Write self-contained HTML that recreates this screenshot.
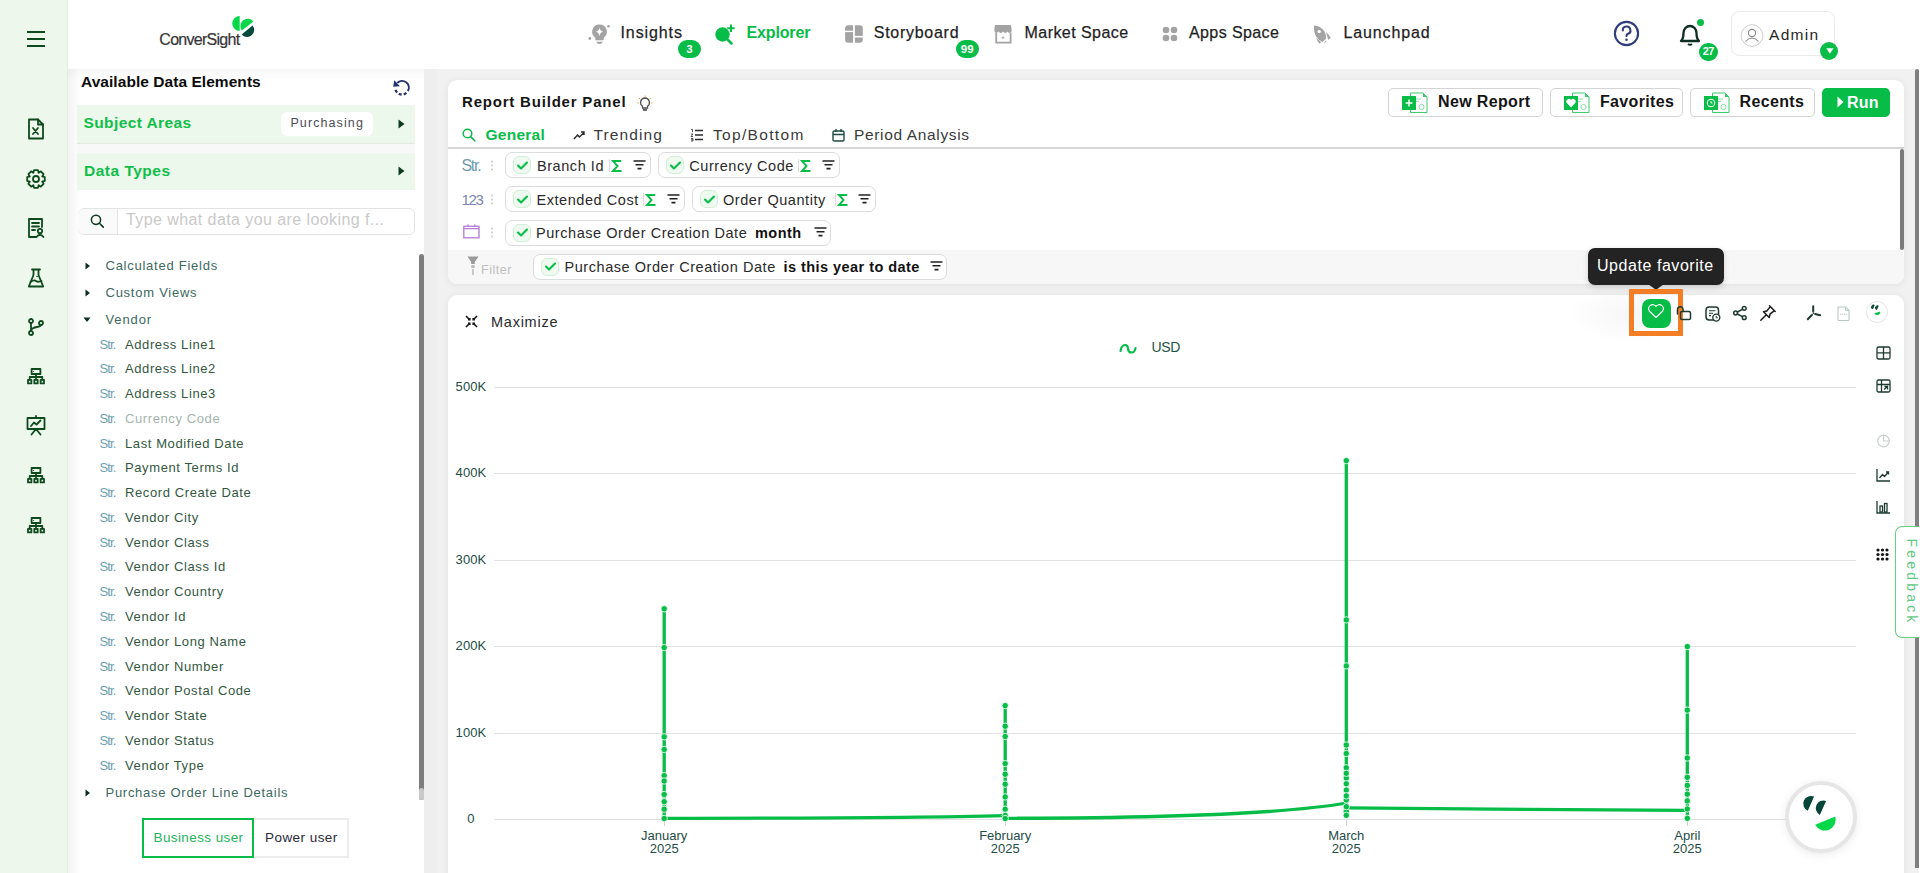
<!DOCTYPE html>
<html><head><meta charset="utf-8"><title>ConverSight Explorer</title>
<style>
*{box-sizing:border-box;margin:0;padding:0}
html,body{width:1923px;height:873px;overflow:hidden;background:#fff;font-family:"Liberation Sans",sans-serif}
body{position:relative}
.a{position:absolute}
.t{position:absolute;white-space:nowrap}
svg{overflow:visible}
</style></head><body>

<div class="a" style="left:424px;top:69px;width:1499px;height:804px;background:#f1f1f1"></div>
<div class="a" style="left:424px;top:69px;width:13px;height:804px;background:#eeeeee"></div>
<div class="a" style="left:68px;top:69px;width:356px;height:804px;background:#fff"></div>
<div class="a" style="left:68px;top:69px;width:356px;height:11px;background:linear-gradient(180deg,#f7f7f7,#fff)"></div>
<div class="a" style="left:68px;top:69px;width:12px;height:804px;background:linear-gradient(90deg,rgba(0,0,0,0.05),rgba(0,0,0,0))"></div>
<div class="a" style="left:68px;top:0px;width:1855px;height:69px;background:#fff"></div>
<div class="a" style="left:0px;top:0px;width:68px;height:873px;background:#edf7ec;border-right:1px solid #e3eee3"></div>
<div class="a" style="left:27px;top:31px;width:18px;height:2px;background:#0e4a1c"></div>
<div class="a" style="left:27px;top:38px;width:18px;height:2px;background:#0e4a1c"></div>
<div class="a" style="left:27px;top:45px;width:18px;height:2px;background:#0e4a1c"></div>
<svg class="a" style="left:27px;top:118px;" width="18" height="22" viewBox="0 0 18 22"><path d="M2 1.5 H11 L16 6.5 V20.5 H2 Z" fill="none" stroke="#0e4a1c" stroke-width="1.8" stroke-linejoin="round" stroke-linecap="round"/><path d="M11 1.5 V6.5 H16" fill="none" stroke="#0e4a1c" stroke-width="1.8" stroke-linejoin="round" stroke-linecap="round"/><path d="M6 10 L11 16 M11 10 L6 16" fill="none" stroke="#0e4a1c" stroke-width="1.8" stroke-linejoin="round" stroke-linecap="round" stroke-width="1.5"/></svg>
<svg class="a" style="left:26px;top:169px;" width="20" height="20" viewBox="0 0 20 20"><path d="M18.78 8.04 L18.78 11.96 L16.21 12.77 L16.35 12.43 L17.60 14.82 L14.82 17.60 L12.43 16.35 L12.77 16.21 L11.96 18.78 L8.04 18.78 L7.23 16.21 L7.57 16.35 L5.18 17.60 L2.40 14.82 L3.65 12.43 L3.79 12.77 L1.22 11.96 L1.22 8.04 L3.79 7.23 L3.65 7.57 L2.40 5.18 L5.18 2.40 L7.57 3.65 L7.23 3.79 L8.04 1.22 L11.96 1.22 L12.77 3.79 L12.43 3.65 L14.82 2.40 L17.60 5.18 L16.35 7.57 L16.21 7.23Z" fill="none" stroke="#0e4a1c" stroke-width="1.8" stroke-linejoin="round" stroke-linecap="round"/><circle cx="10" cy="10" r="3" fill="none" stroke="#0e4a1c" stroke-width="1.8" stroke-linejoin="round" stroke-linecap="round"/></svg>
<svg class="a" style="left:27px;top:217px;" width="18" height="21" viewBox="0 0 18 21"><path d="M9 20 H2 V2 H15 V10" fill="none" stroke="#0e4a1c" stroke-width="1.8" stroke-linejoin="round" stroke-linecap="round"/><path d="M5 6 H12 M5 9.5 H12 M5 13 H8" fill="none" stroke="#0e4a1c" stroke-width="1.8" stroke-linejoin="round" stroke-linecap="round" stroke-width="1.6"/><circle cx="13" cy="14" r="2.2" fill="none" stroke="#0e4a1c" stroke-width="1.8" stroke-linejoin="round" stroke-linecap="round" stroke-width="1.6"/><path d="M9.5 20 Q13 15.5 16.5 20" fill="none" stroke="#0e4a1c" stroke-width="1.8" stroke-linejoin="round" stroke-linecap="round" stroke-width="1.6"/></svg>
<svg class="a" style="left:27px;top:268px;" width="18" height="20" viewBox="0 0 18 20"><path d="M5 1.5 H13 M6.5 1.5 V7 L1.8 18.5 H16.2 L11.5 7 V1.5" fill="none" stroke="#0e4a1c" stroke-width="1.8" stroke-linejoin="round" stroke-linecap="round"/><path d="M3.5 14 Q7 11.5 9 13 T14.5 13" fill="none" stroke="#0e4a1c" stroke-width="1.8" stroke-linejoin="round" stroke-linecap="round" stroke-width="1.5"/><circle cx="10" cy="8.5" r="0.8" fill="#0e4a1c"/></svg>
<svg class="a" style="left:28px;top:318px;" width="16" height="18" viewBox="0 0 16 18"><circle cx="3" cy="3" r="2" fill="none" stroke="#0e4a1c" stroke-width="1.8" stroke-linejoin="round" stroke-linecap="round"/><circle cx="3" cy="15" r="2" fill="none" stroke="#0e4a1c" stroke-width="1.8" stroke-linejoin="round" stroke-linecap="round"/><circle cx="13" cy="5" r="2" fill="none" stroke="#0e4a1c" stroke-width="1.8" stroke-linejoin="round" stroke-linecap="round"/><path d="M3 5 V13 M3 12 Q4 10 9 9 Q12.5 8.5 13 7" fill="none" stroke="#0e4a1c" stroke-width="1.8" stroke-linejoin="round" stroke-linecap="round"/></svg>
<svg class="a" style="left:27px;top:368px;" width="18" height="17" viewBox="0 0 18 17"><rect x="4.6" y="1" width="8.8" height="5" fill="none" stroke="#0e4a1c" stroke-width="1.8" stroke-linejoin="round" stroke-linecap="round" stroke-width="1.6"/><path d="M9 6 V9 M2.7 11.5 V9 H15.3 V11.5 M9 9 V11.5" fill="none" stroke="#0e4a1c" stroke-width="1.8" stroke-linejoin="round" stroke-linecap="round" stroke-width="1.4"/><rect x="1" y="11.8" width="3.4" height="3.6" fill="none" stroke="#0e4a1c" stroke-width="1.8" stroke-linejoin="round" stroke-linecap="round" stroke-width="1.5"/><rect x="7.3" y="11.8" width="3.4" height="3.6" fill="none" stroke="#0e4a1c" stroke-width="1.8" stroke-linejoin="round" stroke-linecap="round" stroke-width="1.5"/><rect x="13.6" y="11.8" width="3.4" height="3.6" fill="none" stroke="#0e4a1c" stroke-width="1.8" stroke-linejoin="round" stroke-linecap="round" stroke-width="1.5"/><circle cx="6.6" cy="3.5" r="0.6" fill="#0e4a1c"/></svg>
<svg class="a" style="left:27px;top:467px;" width="18" height="17" viewBox="0 0 18 17"><rect x="4.6" y="1" width="8.8" height="5" fill="none" stroke="#0e4a1c" stroke-width="1.8" stroke-linejoin="round" stroke-linecap="round" stroke-width="1.6"/><path d="M9 6 V9 M2.7 11.5 V9 H15.3 V11.5 M9 9 V11.5" fill="none" stroke="#0e4a1c" stroke-width="1.8" stroke-linejoin="round" stroke-linecap="round" stroke-width="1.4"/><rect x="1" y="11.8" width="3.4" height="3.6" fill="none" stroke="#0e4a1c" stroke-width="1.8" stroke-linejoin="round" stroke-linecap="round" stroke-width="1.5"/><rect x="7.3" y="11.8" width="3.4" height="3.6" fill="none" stroke="#0e4a1c" stroke-width="1.8" stroke-linejoin="round" stroke-linecap="round" stroke-width="1.5"/><rect x="13.6" y="11.8" width="3.4" height="3.6" fill="none" stroke="#0e4a1c" stroke-width="1.8" stroke-linejoin="round" stroke-linecap="round" stroke-width="1.5"/><circle cx="6.6" cy="3.5" r="0.6" fill="#0e4a1c"/></svg>
<svg class="a" style="left:27px;top:517px;" width="18" height="17" viewBox="0 0 18 17"><rect x="4.6" y="1" width="8.8" height="5" fill="none" stroke="#0e4a1c" stroke-width="1.8" stroke-linejoin="round" stroke-linecap="round" stroke-width="1.6"/><path d="M9 6 V9 M2.7 11.5 V9 H15.3 V11.5 M9 9 V11.5" fill="none" stroke="#0e4a1c" stroke-width="1.8" stroke-linejoin="round" stroke-linecap="round" stroke-width="1.4"/><rect x="1" y="11.8" width="3.4" height="3.6" fill="none" stroke="#0e4a1c" stroke-width="1.8" stroke-linejoin="round" stroke-linecap="round" stroke-width="1.5"/><rect x="7.3" y="11.8" width="3.4" height="3.6" fill="none" stroke="#0e4a1c" stroke-width="1.8" stroke-linejoin="round" stroke-linecap="round" stroke-width="1.5"/><rect x="13.6" y="11.8" width="3.4" height="3.6" fill="none" stroke="#0e4a1c" stroke-width="1.8" stroke-linejoin="round" stroke-linecap="round" stroke-width="1.5"/><circle cx="6.6" cy="3.5" r="0.6" fill="#0e4a1c"/></svg>
<svg class="a" style="left:26px;top:415px;" width="20" height="21" viewBox="0 0 20 21"><path d="M10 1 V3" fill="none" stroke="#0e4a1c" stroke-width="1.8" stroke-linejoin="round" stroke-linecap="round"/><rect x="1.5" y="3" width="17" height="11" fill="none" stroke="#0e4a1c" stroke-width="1.8" stroke-linejoin="round" stroke-linecap="round"/><path d="M5 11 L8 7.5 L10.5 9.5 L14.5 5.5" fill="none" stroke="#0e4a1c" stroke-width="1.8" stroke-linejoin="round" stroke-linecap="round" stroke-width="1.6"/><path d="M10 14 L5.5 19.5 M10 14 L14.5 19.5" fill="none" stroke="#0e4a1c" stroke-width="1.8" stroke-linejoin="round" stroke-linecap="round"/></svg>
<div class="t " style="left:159.3px;top:31.7px;font-size:16px;line-height:16px;color:#363636;font-weight:400;letter-spacing:-0.72px;-webkit-text-stroke:0.2px #363636">ConverSight</div>
<svg class="a" style="left:231px;top:15px;" width="25" height="24" viewBox="0 0 25 24"><path d="M8.7 1 A7.45 7.45 0 0 0 8.7 15.9 Z" fill="#06d84a"/><path d="M10.9 15.5 A7.3 7.3 0 0 1 22.4 6.5 Z" fill="#06d84a"/><path d="M10.7 19.5 L21.5 10.4 A7.05 7.05 0 0 1 10.7 19.5 Z" fill="#05493a"/></svg>
<svg class="a" style="left:588px;top:23px;" width="24" height="22" viewBox="0 0 24 22"><path d="M11.5 1.5 A7.3 7.3 0 0 0 7.3 14.8 V17.3 H15.7 V14.8 A7.3 7.3 0 0 0 11.5 1.5Z" fill="#a3a3a3"/><path d="M8.3 18.8 H14.7 Q14 21 11.5 21 Q9 21 8.3 18.8Z" fill="#a3a3a3"/><path d="M11.5 4.3 Q12 8 15.2 8.8 Q12 9.6 11.5 13.3 Q11 9.6 7.8 8.8 Q11 8 11.5 4.3Z" fill="#fff"/><circle cx="20.5" cy="3.3" r="1.3" fill="#a3a3a3"/><circle cx="1.8" cy="15.5" r="1.4" fill="#a3a3a3"/></svg>
<div class="t " style="left:620.5px;top:24.7px;font-size:16px;line-height:16px;color:#1f1f1f;font-weight:400;letter-spacing:0.9px;-webkit-text-stroke:0.25px #1f1f1f">Insights</div>
<div class="a" style="left:678px;top:40px;width:23px;height:18px;background:#07bd48;border-radius:9px"></div>
<div class="t " style="left:678.0px;top:43.6px;font-size:11.5px;line-height:11.5px;color:#fff;font-weight:700;letter-spacing:0px;width:23px;text-align:center">3</div>
<svg class="a" style="left:714px;top:22px;" width="23" height="24" viewBox="0 0 23 24"><circle cx="8.5" cy="12.5" r="7.2" fill="#07bd48"/><path d="M13 17 L17.5 21.5" stroke="#07bd48" stroke-width="2.6" stroke-linecap="round"/><path d="M17 2.5 V10 M13.3 6.2 H20.7" stroke="#07bd48" stroke-width="2"/></svg>
<div class="t " style="left:746.5px;top:24.7px;font-size:16px;line-height:16px;color:#07bd48;font-weight:700;letter-spacing:-0.15px;">Explorer</div>
<svg class="a" style="left:845px;top:25px;" width="18" height="18" viewBox="0 0 18 18"><rect x="0.1" y="0.3" width="17.7" height="17.5" rx="3.2" fill="#a3a3a3"/><rect x="8.1" y="0" width="1.8" height="18" fill="#fff"/><rect x="0" y="5.7" width="8.5" height="1.4" fill="#fff"/><rect x="9.5" y="10.9" width="8.5" height="1.6" fill="#fff"/></svg>
<div class="t " style="left:873.8px;top:24.7px;font-size:16px;line-height:16px;color:#1f1f1f;font-weight:400;letter-spacing:0.72px;-webkit-text-stroke:0.25px #1f1f1f">Storyboard</div>
<div class="a" style="left:955.5px;top:40px;width:23.5px;height:18px;background:#07bd48;border-radius:9px"></div>
<div class="t " style="left:955.5px;top:43.6px;font-size:11.5px;line-height:11.5px;color:#fff;font-weight:700;letter-spacing:0px;width:23.5px;text-align:center">99</div>
<svg class="a" style="left:994px;top:25px;" width="18" height="19" viewBox="0 0 18 19"><path d="M0.3 5 Q0.3 7.5 2.2 8 Q4.1 7.5 4.5 6.6 Q5.2 8 6.75 8 Q8.3 8 9 6.6 Q9.7 8 11.25 8 Q12.8 8 13.5 6.6 Q14 7.8 15.8 8 Q17.7 7.5 17.7 5 L17 0 H1Z" fill="#a3a3a3"/><path d="M2.2 7.5 V17.7 H16.6 V7.5" fill="none" stroke="#a3a3a3" stroke-width="1.8"/><path d="M9 10.5 L9.6 12.2 L11.3 12.6 L9.6 13 L9 14.8 L8.4 13 L6.7 12.6 L8.4 12.2Z" fill="#a3a3a3"/></svg>
<div class="t " style="left:1024.5px;top:24.7px;font-size:16px;line-height:16px;color:#1f1f1f;font-weight:400;letter-spacing:0.45px;-webkit-text-stroke:0.25px #1f1f1f">Market Space</div>
<svg class="a" style="left:1162px;top:26px;" width="16" height="16" viewBox="0 0 16 16"><circle cx="4" cy="4" r="3.3" fill="#a3a3a3"/><circle cx="12" cy="4" r="3.3" fill="#a3a3a3"/><circle cx="4" cy="12" r="3.3" fill="#a3a3a3"/><circle cx="12" cy="12" r="3.3" fill="#a3a3a3"/></svg>
<div class="t " style="left:1189.0px;top:24.7px;font-size:16px;line-height:16px;color:#1f1f1f;font-weight:400;letter-spacing:0.4px;-webkit-text-stroke:0.25px #1f1f1f">Apps Space</div>
<svg class="a" style="left:1313px;top:25px;" width="19" height="19" viewBox="0 0 19 19"><path d="M1 0.5 Q7.5 0.5 11.5 6.5 Q13.5 10 13 13.8 L9.6 17 Q5.5 15.5 3.2 11.5 Q0.3 6.5 1 0.5Z" fill="#a3a3a3"/><circle cx="6.2" cy="6.6" r="1.7" fill="#fff"/><path d="M13 7 Q15.5 9 17.8 12.8 L15.2 14.7 Z" fill="#a3a3a3"/><path d="M3 12.2 L8 17.3 L6.5 18.7 Q4 15.5 3 12.2Z" fill="#a3a3a3"/><path d="M11.5 16.8 L13.8 15.2 L11.6 18.5Z" fill="#a3a3a3"/></svg>
<div class="t " style="left:1343.5px;top:24.7px;font-size:16px;line-height:16px;color:#1f1f1f;font-weight:400;letter-spacing:0.88px;-webkit-text-stroke:0.25px #1f1f1f">Launchpad</div>
<svg class="a" style="left:1613px;top:20px;" width="27" height="27" viewBox="0 0 27 27"><circle cx="13.5" cy="13.5" r="11.6" fill="none" stroke="#2f3d7a" stroke-width="2.1"/><path d="M9.8 10.5 A3.8 3.8 0 1 1 14.5 14 Q13.5 14.6 13.5 16" fill="none" stroke="#2f3d7a" stroke-width="2.1" stroke-linecap="round"/><circle cx="13.5" cy="19.8" r="1.3" fill="#2f3d7a"/></svg>
<svg class="a" style="left:1679px;top:22.2px;" width="22" height="24" viewBox="0 0 22 24"><path d="M2 19 Q4.5 17 4.5 11 A6.5 7 0 0 1 17.5 11 Q17.5 17 20 19 Z" fill="none" stroke="#0e2e22" stroke-width="2.3" stroke-linejoin="round"/><path d="M9 22 Q11 23.5 13 22" fill="none" stroke="#0e2e22" stroke-width="2"/></svg>
<div class="a" style="left:1697px;top:18.8px;width:7px;height:7px;border-radius:50%;background:#07bd48"></div>
<div class="a" style="left:1699px;top:42.5px;width:18.5px;height:18.5px;border-radius:50%;background:#07bd48"></div>
<div class="t " style="left:1699.0px;top:46.3px;font-size:11px;line-height:11px;color:#fff;font-weight:700;letter-spacing:-0.5px;width:18.5px;text-align:center">27</div>
<div class="a" style="left:1730.5px;top:11px;width:104px;height:45px;border:1px solid #ebebeb;border-radius:8px"></div>
<svg class="a" style="left:1739.5px;top:23.5px;" width="24" height="23" viewBox="0 0 24 23"><circle cx="12" cy="11.5" r="10.8" fill="none" stroke="#c9c9c9" stroke-width="0.9"/><circle cx="12" cy="9" r="3.6" fill="none" stroke="#8a8a8a" stroke-width="1.1"/><path d="M5.5 17.5 Q12 10.5 18.5 17.5" fill="none" stroke="#8a8a8a" stroke-width="1.1"/></svg>
<div class="t " style="left:1769.0px;top:26.9px;font-size:15.5px;line-height:15.5px;color:#262626;font-weight:400;letter-spacing:1.3px;">Admin</div>
<div class="a" style="left:1820px;top:42px;width:18px;height:18px;border-radius:50%;background:#07bd48"></div>
<svg class="a" style="left:1825.5px;top:48px;" width="8" height="6" viewBox="0 0 8 6"><path d="M0.3 0.3 H7.5 L3.9 5.7Z" fill="#fff"/></svg>
<div class="t " style="left:81.0px;top:73.8px;font-size:15.5px;line-height:15.5px;color:#0c0c0c;font-weight:700;letter-spacing:0.05px;">Available Data Elements</div>
<svg class="a" style="left:388px;top:74px;" width="28" height="26" viewBox="0 0 28 26"><path d="M9.19 8.89 A6.8 6.8 0 0 1 19.89 17.1" fill="none" stroke="#24336e" stroke-width="2"/><path d="M18.37 18.91 A6.8 6.8 0 0 1 7.23 14.29" fill="none" stroke="#24336e" stroke-width="2.3" stroke-dasharray="3 2"/><path d="M6.3 6.3 L5.2 12.8 L11.9 12.2Z" fill="#24336e"/></svg>
<div class="a" style="left:77px;top:105px;width:338px;height:39px;background:#ecf8ec;border-bottom:1px solid #e3e8e3"></div>
<div class="a" style="left:77px;top:144px;width:338px;height:9px;background:#f8f8f8"></div>
<div class="t " style="left:83.5px;top:114.9px;font-size:15.5px;line-height:15.5px;color:#10be49;font-weight:700;letter-spacing:0.4px;">Subject Areas</div>
<div class="a" style="left:281px;top:112px;width:92px;height:24px;border-radius:6px;background:#fff"></div>
<div class="t " style="left:290.4px;top:117.4px;font-size:12.5px;line-height:12.5px;color:#4c4c56;font-weight:400;letter-spacing:1.1px;">Purchasing</div>
<svg class="a" style="left:398px;top:119px;" width="7" height="10" viewBox="0 0 7 10"><path d="M0.5 0.5 L6.5 5 L0.5 9.5Z" fill="#0e3a22"/></svg>
<div class="a" style="left:77px;top:153px;width:338px;height:37px;background:#ecf8ec"></div>
<div class="t " style="left:84.0px;top:162.9px;font-size:15.5px;line-height:15.5px;color:#10be49;font-weight:700;letter-spacing:0.5px;">Data Types</div>
<svg class="a" style="left:398px;top:166px;" width="7" height="10" viewBox="0 0 7 10"><path d="M0.5 0.5 L6.5 5 L0.5 9.5Z" fill="#0e3a22"/></svg>
<div class="a" style="left:77.5px;top:208px;width:337px;height:27px;border:1px solid #e3e3e3;border-radius:6px;background:#fff"></div>
<div class="a" style="left:78px;top:209px;width:40px;height:25px;background:#fafafa;border-right:1px solid #e3e3e3;border-radius:6px 0 0 6px"></div>
<svg class="a" style="left:90px;top:213px;" width="15" height="16" viewBox="0 0 15 16"><circle cx="6" cy="6.8" r="4.6" fill="none" stroke="#0c3a1c" stroke-width="1.5"/><path d="M9.4 10.2 L13.3 14.1" stroke="#0c3a1c" stroke-width="1.6" stroke-linecap="round"/></svg>
<div class="t " style="left:126.0px;top:212.4px;font-size:16px;line-height:16px;color:#c9c9c9;font-weight:400;letter-spacing:0.42px;">Type what data you are looking f...</div>
<div class="a" style="left:419px;top:254px;width:5px;height:546px;background:#7d7d7d;border-radius:3px"></div>
<div class="a" style="left:419px;top:788px;width:5px;height:12px;background:#c9c9c9;border-radius:3px"></div>
<svg class="a" style="left:85px;top:262.1px;" width="6" height="8" viewBox="0 0 6 8"><path d="M0.5 0.5 L5 4 L0.5 7.5Z" fill="#0c2f22"/></svg>
<div class="t " style="left:105.5px;top:258.8px;font-size:13px;line-height:13px;color:#3d695e;font-weight:400;letter-spacing:0.75px;">Calculated Fields</div>
<svg class="a" style="left:85px;top:289.1px;" width="6" height="8" viewBox="0 0 6 8"><path d="M0.5 0.5 L5 4 L0.5 7.5Z" fill="#0c2f22"/></svg>
<div class="t " style="left:105.5px;top:285.8px;font-size:13px;line-height:13px;color:#3d695e;font-weight:400;letter-spacing:0.75px;">Custom Views</div>
<svg class="a" style="left:83px;top:317.1px;" width="8" height="6" viewBox="0 0 8 6"><path d="M0.5 0.5 L7.5 0.5 L4 5Z" fill="#0c2f22"/></svg>
<div class="t " style="left:105.5px;top:312.8px;font-size:13px;line-height:13px;color:#3d695e;font-weight:400;letter-spacing:0.9px;">Vendor</div>
<div class="t " style="left:99.5px;top:337.6px;font-size:13px;line-height:13px;color:#6e9fb2;font-weight:400;letter-spacing:-0.9px;">Str.</div>
<div class="t " style="left:125.0px;top:337.6px;font-size:13px;line-height:13px;color:#33583f;font-weight:400;letter-spacing:0.6px;">Address Line1</div>
<div class="t " style="left:99.5px;top:362.4px;font-size:13px;line-height:13px;color:#6e9fb2;font-weight:400;letter-spacing:-0.9px;">Str.</div>
<div class="t " style="left:125.0px;top:362.4px;font-size:13px;line-height:13px;color:#33583f;font-weight:400;letter-spacing:0.6px;">Address Line2</div>
<div class="t " style="left:99.5px;top:387.1px;font-size:13px;line-height:13px;color:#6e9fb2;font-weight:400;letter-spacing:-0.9px;">Str.</div>
<div class="t " style="left:125.0px;top:387.1px;font-size:13px;line-height:13px;color:#33583f;font-weight:400;letter-spacing:0.6px;">Address Line3</div>
<div class="t " style="left:99.5px;top:411.9px;font-size:13px;line-height:13px;color:#6e9fb2;font-weight:400;letter-spacing:-0.9px;">Str.</div>
<div class="t " style="left:125.0px;top:411.9px;font-size:13px;line-height:13px;color:#a3b5ad;font-weight:400;letter-spacing:0.6px;">Currency Code</div>
<div class="t " style="left:99.5px;top:436.6px;font-size:13px;line-height:13px;color:#6e9fb2;font-weight:400;letter-spacing:-0.9px;">Str.</div>
<div class="t " style="left:125.0px;top:436.6px;font-size:13px;line-height:13px;color:#33583f;font-weight:400;letter-spacing:0.6px;">Last Modified Date</div>
<div class="t " style="left:99.5px;top:461.4px;font-size:13px;line-height:13px;color:#6e9fb2;font-weight:400;letter-spacing:-0.9px;">Str.</div>
<div class="t " style="left:125.0px;top:461.4px;font-size:13px;line-height:13px;color:#33583f;font-weight:400;letter-spacing:0.6px;">Payment Terms Id</div>
<div class="t " style="left:99.5px;top:486.2px;font-size:13px;line-height:13px;color:#6e9fb2;font-weight:400;letter-spacing:-0.9px;">Str.</div>
<div class="t " style="left:125.0px;top:486.2px;font-size:13px;line-height:13px;color:#33583f;font-weight:400;letter-spacing:0.6px;">Record Create Date</div>
<div class="t " style="left:99.5px;top:510.9px;font-size:13px;line-height:13px;color:#6e9fb2;font-weight:400;letter-spacing:-0.9px;">Str.</div>
<div class="t " style="left:125.0px;top:510.9px;font-size:13px;line-height:13px;color:#33583f;font-weight:400;letter-spacing:0.6px;">Vendor City</div>
<div class="t " style="left:99.5px;top:535.7px;font-size:13px;line-height:13px;color:#6e9fb2;font-weight:400;letter-spacing:-0.9px;">Str.</div>
<div class="t " style="left:125.0px;top:535.7px;font-size:13px;line-height:13px;color:#33583f;font-weight:400;letter-spacing:0.6px;">Vendor Class</div>
<div class="t " style="left:99.5px;top:560.4px;font-size:13px;line-height:13px;color:#6e9fb2;font-weight:400;letter-spacing:-0.9px;">Str.</div>
<div class="t " style="left:125.0px;top:560.4px;font-size:13px;line-height:13px;color:#33583f;font-weight:400;letter-spacing:0.6px;">Vendor Class Id</div>
<div class="t " style="left:99.5px;top:585.2px;font-size:13px;line-height:13px;color:#6e9fb2;font-weight:400;letter-spacing:-0.9px;">Str.</div>
<div class="t " style="left:125.0px;top:585.2px;font-size:13px;line-height:13px;color:#33583f;font-weight:400;letter-spacing:0.6px;">Vendor Country</div>
<div class="t " style="left:99.5px;top:610.0px;font-size:13px;line-height:13px;color:#6e9fb2;font-weight:400;letter-spacing:-0.9px;">Str.</div>
<div class="t " style="left:125.0px;top:610.0px;font-size:13px;line-height:13px;color:#33583f;font-weight:400;letter-spacing:0.6px;">Vendor Id</div>
<div class="t " style="left:99.5px;top:634.7px;font-size:13px;line-height:13px;color:#6e9fb2;font-weight:400;letter-spacing:-0.9px;">Str.</div>
<div class="t " style="left:125.0px;top:634.7px;font-size:13px;line-height:13px;color:#33583f;font-weight:400;letter-spacing:0.6px;">Vendor Long Name</div>
<div class="t " style="left:99.5px;top:659.5px;font-size:13px;line-height:13px;color:#6e9fb2;font-weight:400;letter-spacing:-0.9px;">Str.</div>
<div class="t " style="left:125.0px;top:659.5px;font-size:13px;line-height:13px;color:#33583f;font-weight:400;letter-spacing:0.6px;">Vendor Number</div>
<div class="t " style="left:99.5px;top:684.2px;font-size:13px;line-height:13px;color:#6e9fb2;font-weight:400;letter-spacing:-0.9px;">Str.</div>
<div class="t " style="left:125.0px;top:684.2px;font-size:13px;line-height:13px;color:#33583f;font-weight:400;letter-spacing:0.6px;">Vendor Postal Code</div>
<div class="t " style="left:99.5px;top:709.0px;font-size:13px;line-height:13px;color:#6e9fb2;font-weight:400;letter-spacing:-0.9px;">Str.</div>
<div class="t " style="left:125.0px;top:709.0px;font-size:13px;line-height:13px;color:#33583f;font-weight:400;letter-spacing:0.6px;">Vendor State</div>
<div class="t " style="left:99.5px;top:733.8px;font-size:13px;line-height:13px;color:#6e9fb2;font-weight:400;letter-spacing:-0.9px;">Str.</div>
<div class="t " style="left:125.0px;top:733.8px;font-size:13px;line-height:13px;color:#33583f;font-weight:400;letter-spacing:0.6px;">Vendor Status</div>
<div class="t " style="left:99.5px;top:758.5px;font-size:13px;line-height:13px;color:#6e9fb2;font-weight:400;letter-spacing:-0.9px;">Str.</div>
<div class="t " style="left:125.0px;top:758.5px;font-size:13px;line-height:13px;color:#33583f;font-weight:400;letter-spacing:0.6px;">Vendor Type</div>
<svg class="a" style="left:85px;top:788.8px;" width="6" height="8" viewBox="0 0 6 8"><path d="M0.5 0.5 L5 4 L0.5 7.5Z" fill="#0c2f22"/></svg>
<div class="t " style="left:105.5px;top:785.6px;font-size:13px;line-height:13px;color:#3d695e;font-weight:400;letter-spacing:0.72px;">Purchase Order Line Details</div>
<div class="a" style="left:142px;top:818px;width:112px;height:40px;border:2px solid #07bd48;background:#fff"></div>
<div class="a" style="left:254px;top:818px;width:94.5px;height:40px;border:2px solid #ececec;border-left:none;background:#fff"></div>
<div class="t " style="left:153.5px;top:831.0px;font-size:13.5px;line-height:13.5px;color:#22b45a;font-weight:400;letter-spacing:0.4px;">Business user</div>
<div class="t " style="left:265.0px;top:831.0px;font-size:13.5px;line-height:13.5px;color:#2a2a3a;font-weight:400;letter-spacing:0.45px;">Power user</div>
<div class="a" style="left:448px;top:80px;width:1456px;height:204px;background:#fff;border-radius:9px;box-shadow:0 1px 8px rgba(0,0,0,0.07)"></div>
<div class="a" style="left:448px;top:250px;width:1456px;height:34px;background:#f7f7f7;border-radius:0 0 9px 9px"></div>
<div class="t " style="left:462.0px;top:94.0px;font-size:15px;line-height:15px;color:#151515;font-weight:700;letter-spacing:0.8px;">Report Builder Panel</div>
<svg class="a" style="left:637px;top:94.5px;" width="16" height="18" viewBox="0 0 16 18"><path d="M8 3 A4.5 4.5 0 0 0 5.5 11.2 V13 H10.5 V11.2 A4.5 4.5 0 0 0 8 3Z" fill="none" stroke="#555" stroke-width="1.3"/><rect x="5.8" y="13.5" width="4.4" height="2.5" rx="1" fill="#666"/><path d="M8 0.5 V1.8 M2 3 L3 4 M14 3 L13 4 M0.5 8 H1.8 M15.5 8 H14.2" stroke="#f0a030" stroke-width="1"/></svg>
<div class="a" style="left:1388px;top:88px;width:154.5px;height:29px;border:1px solid #d4d4d4;border-radius:5px;background:#fff"></div>
<svg class="a" style="left:1401.5px;top:92px;" width="26" height="21" viewBox="0 0 26 21"><path d="M8.5 1 H21 L25 5 V20.5 H8.5Z" fill="#fff" stroke="#3dcc6c" stroke-width="1"/><path d="M21 1 V5 H25" fill="#3dcc6c"/><path d="M11 7 H19 M11 9.5 H17" stroke="#7ad998" stroke-width="0.8"/><circle cx="19.5" cy="15" r="2.6" fill="none" stroke="#7ad998" stroke-width="0.9"/><rect x="0" y="4" width="14" height="14" fill="#07bd48"/><path d="M7 7.6 V14.6 M3.6 11 H10.4" stroke="#fff" stroke-width="1.4"/></svg>
<div class="t " style="left:1438.0px;top:94.0px;font-size:16px;line-height:16px;color:#151515;font-weight:700;letter-spacing:0.35px;">New Report</div>
<div class="a" style="left:1550px;top:88px;width:132.5px;height:29px;border:1px solid #d4d4d4;border-radius:5px;background:#fff"></div>
<svg class="a" style="left:1563.5px;top:92px;" width="26" height="21" viewBox="0 0 26 21"><path d="M8.5 1 H21 L25 5 V20.5 H8.5Z" fill="#fff" stroke="#3dcc6c" stroke-width="1"/><path d="M21 1 V5 H25" fill="#3dcc6c"/><path d="M11 7 H19 M11 9.5 H17" stroke="#7ad998" stroke-width="0.8"/><circle cx="19.5" cy="15" r="2.6" fill="none" stroke="#7ad998" stroke-width="0.9"/><rect x="0" y="4" width="14" height="14" fill="#07bd48"/><path d="M7 15.5 L2.8 11 A2.4 2.4 0 0 1 7 8 A2.4 2.4 0 0 1 11.2 11Z" fill="#fff"/></svg>
<div class="t " style="left:1600.0px;top:94.0px;font-size:16px;line-height:16px;color:#151515;font-weight:700;letter-spacing:0.35px;">Favorites</div>
<div class="a" style="left:1690px;top:88px;width:124.5px;height:29px;border:1px solid #d4d4d4;border-radius:5px;background:#fff"></div>
<svg class="a" style="left:1703.5px;top:92px;" width="26" height="21" viewBox="0 0 26 21"><path d="M8.5 1 H21 L25 5 V20.5 H8.5Z" fill="#fff" stroke="#3dcc6c" stroke-width="1"/><path d="M21 1 V5 H25" fill="#3dcc6c"/><path d="M11 7 H19 M11 9.5 H17" stroke="#7ad998" stroke-width="0.8"/><circle cx="19.5" cy="15" r="2.6" fill="none" stroke="#7ad998" stroke-width="0.9"/><rect x="0" y="4" width="14" height="14" fill="#07bd48"/><circle cx="7" cy="11" r="3.8" fill="none" stroke="#fff" stroke-width="1"/><path d="M7 9 V11 H8.5" stroke="#fff" stroke-width="0.9" fill="none"/></svg>
<div class="t " style="left:1739.5px;top:94.0px;font-size:16px;line-height:16px;color:#151515;font-weight:700;letter-spacing:0.35px;">Recents</div>
<div class="a" style="left:1821.5px;top:88px;width:68.5px;height:29px;border-radius:5px;background:#07bd48"></div>
<svg class="a" style="left:1836.5px;top:96px;" width="7" height="12" viewBox="0 0 7 12"><path d="M0.5 0.5 L6.5 6 L0.5 11.5Z" fill="#fff"/></svg>
<div class="t " style="left:1847.0px;top:94.5px;font-size:16px;line-height:16px;color:#fff;font-weight:700;letter-spacing:0.2px;">Run</div>
<div class="t " style="left:485.5px;top:126.7px;font-size:15.5px;line-height:15.5px;color:#07bd48;font-weight:700;letter-spacing:0.26px;">General</div>
<svg class="a" style="left:462px;top:128px;" width="14" height="14" viewBox="0 0 14 14"><circle cx="5.5" cy="5.5" r="4.3" fill="none" stroke="#07bd48" stroke-width="1.5"/><path d="M8.6 8.6 L12.8 12.8" stroke="#07bd48" stroke-width="1.6" stroke-linecap="round"/></svg>
<svg class="a" style="left:573px;top:130px;" width="12" height="10" viewBox="0 0 12 10"><path d="M1 9 L4.5 5 L6.5 7 L11 2.5 M8 2 H11 V5" fill="none" stroke="#2a2a2a" stroke-width="1.4"/></svg>
<div class="t " style="left:593.5px;top:126.7px;font-size:15.5px;line-height:15.5px;color:#3a3a3a;font-weight:400;letter-spacing:1.1px;">Trending</div>
<svg class="a" style="left:690px;top:128px;" width="14" height="14" viewBox="0 0 14 14"><path d="M5 2.5 H13 M5 7 H13 M5 11.5 H13" stroke="#2a2a2a" stroke-width="1.4"/><path d="M1 1.5 H2.5 V4 M1 6 H3 L1 8.5 H3 M1 10.5 H3 V13 H1 M1 11.8 H3" fill="none" stroke="#2a2a2a" stroke-width="0.8"/></svg>
<div class="t " style="left:713.0px;top:126.7px;font-size:15.5px;line-height:15.5px;color:#3a3a3a;font-weight:400;letter-spacing:1.33px;">Top/Bottom</div>
<svg class="a" style="left:832px;top:128px;" width="13" height="14" viewBox="0 0 13 14"><rect x="1" y="3" width="11" height="10" rx="1.3" fill="none" stroke="#1d4a40" stroke-width="1.4"/><path d="M1 6.5 H12 M4 1 V4 M9 1 V4" stroke="#1d4a40" stroke-width="1.4"/></svg>
<div class="t " style="left:854.0px;top:126.7px;font-size:15.5px;line-height:15.5px;color:#3a3a3a;font-weight:400;letter-spacing:0.65px;">Period Analysis</div>
<div class="a" style="left:448px;top:147px;width:1456px;height:2px;background:#d6d6d6"></div>
<div class="a" style="left:1899.5px;top:149px;width:4.0px;height:101px;background:#7a7a7a;border-radius:2px"></div>
<div class="t " style="left:461.5px;top:157.7px;font-size:16px;line-height:16px;color:#6f9bb0;font-weight:400;letter-spacing:-1.3px;">Str.</div>
<svg class="a" style="left:490px;top:159.7px;" width="4" height="11" viewBox="0 0 4 11"><circle cx="2" cy="1.5" r="1" fill="#c8c8c8"/><circle cx="2" cy="5.5" r="1" fill="#c8c8c8"/><circle cx="2" cy="9.5" r="1" fill="#c8c8c8"/></svg>
<div class="t " style="left:461.5px;top:192.0px;font-size:15px;line-height:15px;color:#7d86b0;font-weight:400;letter-spacing:-1.3px;">123</div>
<svg class="a" style="left:490px;top:193.7px;" width="4" height="11" viewBox="0 0 4 11"><circle cx="2" cy="1.5" r="1" fill="#c8c8c8"/><circle cx="2" cy="5.5" r="1" fill="#c8c8c8"/><circle cx="2" cy="9.5" r="1" fill="#c8c8c8"/></svg>
<svg class="a" style="left:463px;top:224px;" width="17" height="15" viewBox="0 0 17 15"><rect x="0.8" y="2.3" width="15.2" height="11.5" fill="none" stroke="#b57ad4" stroke-width="1.3"/><path d="M0.8 4.6 H16 M5 0.3 V3 M11.8 0.3 V3" stroke="#b57ad4" stroke-width="1.1"/></svg>
<svg class="a" style="left:490px;top:227px;" width="4" height="11" viewBox="0 0 4 11"><circle cx="2" cy="1.5" r="1" fill="#c8c8c8"/><circle cx="2" cy="5.5" r="1" fill="#c8c8c8"/><circle cx="2" cy="9.5" r="1" fill="#c8c8c8"/></svg>
<div class="a" style="left:505px;top:152.2px;width:145.5px;height:26px;border:1px solid #dcdcdc;border-radius:7px;background:#fff"></div>
<div class="a" style="left:513px;top:156.2px;width:18px;height:18px;border-radius:6px;background:#eef9ef;border:1px solid #d3efd8"></div>
<svg class="a" style="left:516.5px;top:160.7px;" width="11" height="9" viewBox="0 0 11 9"><path d="M1 4.5 L4 7.5 L10 1.5" fill="none" stroke="#07bd48" stroke-width="2.1" stroke-linecap="round" stroke-linejoin="round"/></svg>
<div class="t " style="left:537.0px;top:158.6px;font-size:14.5px;line-height:14.5px;color:#2a2a2a;font-weight:400;letter-spacing:0.55px;">Branch Id</div>
<div class="a" style="left:608.5px;top:158.7px;width:1.0px;height:13.0px;background:#dcdcdc"></div>
<svg class="a" style="left:611.5px;top:159.89999999999998px;" width="10" height="12" viewBox="0 0 10 12"><path d="M9.2 1 H1 L5.5 6 L1 11 H9.5" fill="none" stroke="#07bd48" stroke-width="1.9" stroke-linejoin="miter"/></svg>
<svg class="a" style="left:633px;top:159.7px;" width="13" height="10" viewBox="0 0 13 10"><path d="M0.5 1 H12.5 M2.5 4.8 H10.5 M4.5 8.6 H8.5" stroke="#222" stroke-width="1.6"/></svg>
<div class="a" style="left:658px;top:152.2px;width:181.5px;height:26px;border:1px solid #dcdcdc;border-radius:7px;background:#fff"></div>
<div class="a" style="left:666px;top:156.2px;width:18px;height:18px;border-radius:6px;background:#eef9ef;border:1px solid #d3efd8"></div>
<svg class="a" style="left:669.5px;top:160.7px;" width="11" height="9" viewBox="0 0 11 9"><path d="M1 4.5 L4 7.5 L10 1.5" fill="none" stroke="#07bd48" stroke-width="2.1" stroke-linecap="round" stroke-linejoin="round"/></svg>
<div class="t " style="left:689.3px;top:158.6px;font-size:14.5px;line-height:14.5px;color:#2a2a2a;font-weight:400;letter-spacing:0.55px;">Currency Code</div>
<div class="a" style="left:798px;top:158.7px;width:1px;height:13.0px;background:#dcdcdc"></div>
<svg class="a" style="left:801px;top:159.89999999999998px;" width="10" height="12" viewBox="0 0 10 12"><path d="M9.2 1 H1 L5.5 6 L1 11 H9.5" fill="none" stroke="#07bd48" stroke-width="1.9" stroke-linejoin="miter"/></svg>
<svg class="a" style="left:822px;top:159.7px;" width="13" height="10" viewBox="0 0 13 10"><path d="M0.5 1 H12.5 M2.5 4.8 H10.5 M4.5 8.6 H8.5" stroke="#222" stroke-width="1.6"/></svg>
<div class="a" style="left:505px;top:186.2px;width:179.5px;height:26px;border:1px solid #dcdcdc;border-radius:7px;background:#fff"></div>
<div class="a" style="left:513px;top:190.2px;width:18px;height:18px;border-radius:6px;background:#eef9ef;border:1px solid #d3efd8"></div>
<svg class="a" style="left:516.5px;top:194.7px;" width="11" height="9" viewBox="0 0 11 9"><path d="M1 4.5 L4 7.5 L10 1.5" fill="none" stroke="#07bd48" stroke-width="2.1" stroke-linecap="round" stroke-linejoin="round"/></svg>
<div class="t " style="left:536.5px;top:192.6px;font-size:14.5px;line-height:14.5px;color:#2a2a2a;font-weight:400;letter-spacing:0.55px;">Extended Cost</div>
<div class="a" style="left:643px;top:192.7px;width:1px;height:13.0px;background:#dcdcdc"></div>
<svg class="a" style="left:646px;top:193.89999999999998px;" width="10" height="12" viewBox="0 0 10 12"><path d="M9.2 1 H1 L5.5 6 L1 11 H9.5" fill="none" stroke="#07bd48" stroke-width="1.9" stroke-linejoin="miter"/></svg>
<svg class="a" style="left:667px;top:193.7px;" width="13" height="10" viewBox="0 0 13 10"><path d="M0.5 1 H12.5 M2.5 4.8 H10.5 M4.5 8.6 H8.5" stroke="#222" stroke-width="1.6"/></svg>
<div class="a" style="left:692px;top:186.2px;width:183.5px;height:26px;border:1px solid #dcdcdc;border-radius:7px;background:#fff"></div>
<div class="a" style="left:700px;top:190.2px;width:18px;height:18px;border-radius:6px;background:#eef9ef;border:1px solid #d3efd8"></div>
<svg class="a" style="left:703.5px;top:194.7px;" width="11" height="9" viewBox="0 0 11 9"><path d="M1 4.5 L4 7.5 L10 1.5" fill="none" stroke="#07bd48" stroke-width="2.1" stroke-linecap="round" stroke-linejoin="round"/></svg>
<div class="t " style="left:723.0px;top:192.6px;font-size:14.5px;line-height:14.5px;color:#2a2a2a;font-weight:400;letter-spacing:0.55px;">Order Quantity</div>
<div class="a" style="left:834.5px;top:192.7px;width:1.0px;height:13.0px;background:#dcdcdc"></div>
<svg class="a" style="left:837.5px;top:193.89999999999998px;" width="10" height="12" viewBox="0 0 10 12"><path d="M9.2 1 H1 L5.5 6 L1 11 H9.5" fill="none" stroke="#07bd48" stroke-width="1.9" stroke-linejoin="miter"/></svg>
<svg class="a" style="left:857.5px;top:193.7px;" width="13" height="10" viewBox="0 0 13 10"><path d="M0.5 1 H12.5 M2.5 4.8 H10.5 M4.5 8.6 H8.5" stroke="#222" stroke-width="1.6"/></svg>
<div class="a" style="left:505px;top:219.5px;width:326px;height:26px;border:1px solid #dcdcdc;border-radius:7px;background:#fff"></div>
<div class="a" style="left:513px;top:223.5px;width:18px;height:18px;border-radius:6px;background:#eef9ef;border:1px solid #d3efd8"></div>
<svg class="a" style="left:516.5px;top:228.0px;" width="11" height="9" viewBox="0 0 11 9"><path d="M1 4.5 L4 7.5 L10 1.5" fill="none" stroke="#07bd48" stroke-width="2.1" stroke-linecap="round" stroke-linejoin="round"/></svg>
<div class="t " style="left:536.0px;top:225.9px;font-size:14.5px;line-height:14.5px;color:#2a2a2a;font-weight:400;letter-spacing:0.55px;">Purchase Order Creation Date</div>
<div class="t " style="left:755.0px;top:225.9px;font-size:14.5px;line-height:14.5px;color:#111;font-weight:700;letter-spacing:0.45px;">month</div>
<svg class="a" style="left:813.5px;top:227px;" width="13" height="10" viewBox="0 0 13 10"><path d="M0.5 1 H12.5 M2.5 4.8 H10.5 M4.5 8.6 H8.5" stroke="#222" stroke-width="1.6"/></svg>
<svg class="a" style="left:467px;top:256px;" width="12" height="19" viewBox="0 0 12 19"><path d="M0.5 0.5 H11.5 L7.8 6 V8 H4.2 V6Z" fill="#9a9a9a"/><rect x="4.3" y="9" width="3.4" height="3" fill="#bdbdbd"/><rect x="5.2" y="13" width="1.6" height="6" fill="#bdbdbd"/></svg>
<div class="t " style="left:481.0px;top:264.4px;font-size:12.5px;line-height:12.5px;color:#c0c0c0;font-weight:400;letter-spacing:0.55px;">Filter</div>
<div class="a" style="left:533px;top:253.5px;width:414px;height:26px;border:1px solid #dcdcdc;border-radius:7px;background:#fff"></div>
<div class="a" style="left:541px;top:257.5px;width:18px;height:18px;border-radius:6px;background:#eef9ef;border:1px solid #d3efd8"></div>
<svg class="a" style="left:544.5px;top:262.0px;" width="11" height="9" viewBox="0 0 11 9"><path d="M1 4.5 L4 7.5 L10 1.5" fill="none" stroke="#07bd48" stroke-width="2.1" stroke-linecap="round" stroke-linejoin="round"/></svg>
<div class="t " style="left:564.5px;top:259.9px;font-size:14.5px;line-height:14.5px;color:#2a2a2a;font-weight:400;letter-spacing:0.55px;">Purchase Order Creation Date</div>
<div class="t " style="left:783.5px;top:259.9px;font-size:14.5px;line-height:14.5px;color:#111;font-weight:700;letter-spacing:0.45px;">is this year to date</div>
<svg class="a" style="left:930px;top:261px;" width="13" height="10" viewBox="0 0 13 10"><path d="M0.5 1 H12.5 M2.5 4.8 H10.5 M4.5 8.6 H8.5" stroke="#222" stroke-width="1.6"/></svg>
<div class="a" style="left:448px;top:295px;width:1456px;height:600px;background:#fff;border-radius:9px;box-shadow:0 1px 8px rgba(0,0,0,0.07)"></div>
<svg class="a" style="left:465px;top:315px;" width="13" height="13" viewBox="0 0 13 13"><path d="M1 1 L4.5 4.5 M12 1 L8.5 4.5 M1 12 L4.5 8.5 M12 12 L8.5 8.5" stroke="#1a1a1a" stroke-width="1.6"/><path d="M3 4.8 H4.8 V3 M10 4.8 H8.2 V3 M3 8.2 H4.8 V10 M10 8.2 H8.2 V10" fill="none" stroke="#1a1a1a" stroke-width="1.6"/></svg>
<div class="t " style="left:491.0px;top:315.0px;font-size:14.5px;line-height:14.5px;color:#2a2a2a;font-weight:400;letter-spacing:0.75px;">Maximize</div>
<svg class="a" style="left:1119px;top:343px;" width="18" height="11" viewBox="0 0 18 11"><path d="M1.5 8 Q2.5 2 6 2 Q9 2 9 6 Q9.5 9.5 12.5 9.5 Q16 9.5 16.5 5" fill="none" stroke="#07bd48" stroke-width="2.2" stroke-linecap="round"/></svg>
<div class="t " style="left:1151.5px;top:339.9px;font-size:14px;line-height:14px;color:#1c5548;font-weight:400;letter-spacing:-0.3px;">USD</div>
<div class="a" style="left:493.5px;top:819px;width:1362.5px;height:1px;background:#e2e2e2"></div>
<div class="t" style="left:421px;width:100px;text-align:center;top:812.2px;font-size:13px;line-height:13px;color:#1e4d46;letter-spacing:0.1px">0</div>
<div class="a" style="left:493.5px;top:733px;width:1362.5px;height:1px;background:#e2e2e2"></div>
<div class="t" style="left:421px;width:100px;text-align:center;top:725.8px;font-size:13px;line-height:13px;color:#1e4d46;letter-spacing:0.1px">100K</div>
<div class="a" style="left:493.5px;top:646px;width:1362.5px;height:1px;background:#e2e2e2"></div>
<div class="t" style="left:421px;width:100px;text-align:center;top:639.3px;font-size:13px;line-height:13px;color:#1e4d46;letter-spacing:0.1px">200K</div>
<div class="a" style="left:493.5px;top:560px;width:1362.5px;height:1px;background:#e2e2e2"></div>
<div class="t" style="left:421px;width:100px;text-align:center;top:552.9px;font-size:13px;line-height:13px;color:#1e4d46;letter-spacing:0.1px">300K</div>
<div class="a" style="left:493.5px;top:473px;width:1362.5px;height:1px;background:#e2e2e2"></div>
<div class="t" style="left:421px;width:100px;text-align:center;top:466.4px;font-size:13px;line-height:13px;color:#1e4d46;letter-spacing:0.1px">400K</div>
<div class="a" style="left:493.5px;top:387px;width:1362.5px;height:1px;background:#e2e2e2"></div>
<div class="t" style="left:421px;width:100px;text-align:center;top:380.0px;font-size:13px;line-height:13px;color:#1e4d46;letter-spacing:0.1px">500K</div>
<div class="t" style="left:604.2px;width:120px;text-align:center;top:828.5px;font-size:13px;line-height:13.5px;color:#1e4d46">January<br>2025</div>
<div class="a" style="left:664px;top:820px;width:1px;height:6px;background:#d0d0d0"></div>
<div class="t" style="left:945.2px;width:120px;text-align:center;top:828.5px;font-size:13px;line-height:13.5px;color:#1e4d46">February<br>2025</div>
<div class="a" style="left:1005px;top:820px;width:1px;height:6px;background:#d0d0d0"></div>
<div class="t" style="left:1286.3px;width:120px;text-align:center;top:828.5px;font-size:13px;line-height:13.5px;color:#1e4d46">March<br>2025</div>
<div class="a" style="left:1346px;top:820px;width:1px;height:6px;background:#d0d0d0"></div>
<div class="t" style="left:1627.3px;width:120px;text-align:center;top:828.5px;font-size:13px;line-height:13.5px;color:#1e4d46">April<br>2025</div>
<div class="a" style="left:1687px;top:820px;width:1px;height:6px;background:#d0d0d0"></div>
<svg class="a" style="left:0;top:0" width="1923" height="873" viewBox="0 0 1923 873"><path d="M664.2 608.8 V818.5" stroke="#07bd48" stroke-width="3.3"/><path d="M1005.2 705.6 V818.5" stroke="#07bd48" stroke-width="3.3"/><path d="M1346.3 460.6 V815.3" stroke="#07bd48" stroke-width="3.3"/><path d="M1687.3 646.6 V818.3" stroke="#07bd48" stroke-width="3.3"/><path d="M664.2 818.3 C 850 818.3, 950 817, 1005.2 815.6" fill="none" stroke="#07bd48" stroke-width="3.3"/><path d="M1005.2 818.3 C 1180 818, 1290 813, 1346.3 803" fill="none" stroke="#07bd48" stroke-width="3.3"/><path d="M1346.3 807.8 C 1420 809.3, 1600 809.3, 1687.3 810.4" fill="none" stroke="#07bd48" stroke-width="3.3"/><circle cx="664.2" cy="608.8" r="3.2" fill="#07bd48" stroke="#fff" stroke-width="0.8"/><circle cx="664.2" cy="647.6" r="3.2" fill="#07bd48" stroke="#fff" stroke-width="0.8"/><circle cx="664.2" cy="736.8" r="3.2" fill="#07bd48" stroke="#fff" stroke-width="0.8"/><circle cx="664.2" cy="749.5" r="3.2" fill="#07bd48" stroke="#fff" stroke-width="0.8"/><circle cx="664.2" cy="775.6" r="3.2" fill="#07bd48" stroke="#fff" stroke-width="0.8"/><circle cx="664.2" cy="781" r="3.2" fill="#07bd48" stroke="#fff" stroke-width="0.8"/><circle cx="664.2" cy="794.5" r="3.2" fill="#07bd48" stroke="#fff" stroke-width="0.8"/><circle cx="664.2" cy="801.7" r="3.2" fill="#07bd48" stroke="#fff" stroke-width="0.8"/><circle cx="664.2" cy="809.2" r="3.2" fill="#07bd48" stroke="#fff" stroke-width="0.8"/><circle cx="664.2" cy="818.5" r="3.2" fill="#07bd48" stroke="#fff" stroke-width="0.8"/><circle cx="1005.2" cy="705.6" r="3.2" fill="#07bd48" stroke="#fff" stroke-width="0.8"/><circle cx="1005.2" cy="726.2" r="3.2" fill="#07bd48" stroke="#fff" stroke-width="0.8"/><circle cx="1005.2" cy="736.5" r="3.2" fill="#07bd48" stroke="#fff" stroke-width="0.8"/><circle cx="1005.2" cy="763.6" r="3.2" fill="#07bd48" stroke="#fff" stroke-width="0.8"/><circle cx="1005.2" cy="774.2" r="3.2" fill="#07bd48" stroke="#fff" stroke-width="0.8"/><circle cx="1005.2" cy="784.2" r="3.2" fill="#07bd48" stroke="#fff" stroke-width="0.8"/><circle cx="1005.2" cy="796.9" r="3.2" fill="#07bd48" stroke="#fff" stroke-width="0.8"/><circle cx="1005.2" cy="809.2" r="3.2" fill="#07bd48" stroke="#fff" stroke-width="0.8"/><circle cx="1005.2" cy="815.4" r="3.2" fill="#07bd48" stroke="#fff" stroke-width="0.8"/><circle cx="1005.2" cy="818.5" r="3.2" fill="#07bd48" stroke="#fff" stroke-width="0.8"/><circle cx="1346.3" cy="460.6" r="3.2" fill="#07bd48" stroke="#fff" stroke-width="0.8"/><circle cx="1346.3" cy="619.9" r="3.2" fill="#07bd48" stroke="#fff" stroke-width="0.8"/><circle cx="1346.3" cy="665.9" r="3.2" fill="#07bd48" stroke="#fff" stroke-width="0.8"/><circle cx="1346.3" cy="778.1" r="3.2" fill="#07bd48" stroke="#fff" stroke-width="0.8"/><circle cx="1346.3" cy="799.9" r="3.2" fill="#07bd48" stroke="#fff" stroke-width="0.8"/><circle cx="1346.3" cy="811.3" r="3.2" fill="#07bd48" stroke="#fff" stroke-width="0.8"/><circle cx="1346.3" cy="745" r="3.2" fill="#07bd48" stroke="#fff" stroke-width="0.8"/><circle cx="1346.3" cy="753.5" r="3.2" fill="#07bd48" stroke="#fff" stroke-width="0.8"/><circle cx="1346.3" cy="767.8" r="3.2" fill="#07bd48" stroke="#fff" stroke-width="0.8"/><circle cx="1346.3" cy="773.3" r="3.2" fill="#07bd48" stroke="#fff" stroke-width="0.8"/><circle cx="1346.3" cy="783.8" r="3.2" fill="#07bd48" stroke="#fff" stroke-width="0.8"/><circle cx="1346.3" cy="790.1" r="3.2" fill="#07bd48" stroke="#fff" stroke-width="0.8"/><circle cx="1346.3" cy="795.9" r="3.2" fill="#07bd48" stroke="#fff" stroke-width="0.8"/><circle cx="1346.3" cy="806.7" r="3.2" fill="#07bd48" stroke="#fff" stroke-width="0.8"/><circle cx="1346.3" cy="815.3" r="3.2" fill="#07bd48" stroke="#fff" stroke-width="0.8"/><circle cx="1687.3" cy="646.6" r="3.2" fill="#07bd48" stroke="#fff" stroke-width="0.8"/><circle cx="1687.3" cy="710.1" r="3.2" fill="#07bd48" stroke="#fff" stroke-width="0.8"/><circle cx="1687.3" cy="758" r="3.2" fill="#07bd48" stroke="#fff" stroke-width="0.8"/><circle cx="1687.3" cy="777.3" r="3.2" fill="#07bd48" stroke="#fff" stroke-width="0.8"/><circle cx="1687.3" cy="785.4" r="3.2" fill="#07bd48" stroke="#fff" stroke-width="0.8"/><circle cx="1687.3" cy="794.1" r="3.2" fill="#07bd48" stroke="#fff" stroke-width="0.8"/><circle cx="1687.3" cy="800.9" r="3.2" fill="#07bd48" stroke="#fff" stroke-width="0.8"/><circle cx="1687.3" cy="809" r="3.2" fill="#07bd48" stroke="#fff" stroke-width="0.8"/><circle cx="1687.3" cy="818.3" r="3.2" fill="#07bd48" stroke="#fff" stroke-width="0.8"/></svg>
<div class="a" style="left:1588px;top:248px;width:136px;height:36.5px;background:#232323;border-radius:7px;box-shadow:0 2px 6px rgba(0,0,0,0.15)"></div>
<svg class="a" style="left:1648px;top:284px;" width="16" height="5.5" viewBox="0 0 16 5.5"><path d="M0 0 H16 L9.2 5 Q8 5.8 6.8 5 Z" fill="#232323"/></svg>
<div class="t " style="left:1597.0px;top:257.9px;font-size:16px;line-height:16px;color:#fff;font-weight:400;letter-spacing:0.55px;">Update favorite</div>
<div class="a" style="left:1540px;top:292px;width:110px;height:56px;background:radial-gradient(ellipse 60% 55% at 85% 40%,rgba(0,0,0,0.035),rgba(0,0,0,0))"></div>
<div class="a" style="left:1629px;top:289px;width:54px;height:47px;border:5px solid #f47e25"></div>
<div class="a" style="left:1641.5px;top:298.5px;width:29px;height:29px;border-radius:8px;background:#07bd48"></div>
<svg class="a" style="left:1647px;top:303px;" width="18" height="16" viewBox="0 0 18 16"><path d="M9 14.5 L2.3 8 A3.6 3.6 0 0 1 9 3.4 A3.6 3.6 0 0 1 15.7 8Z" fill="none" stroke="#fff" stroke-width="1.15" stroke-linejoin="round"/></svg>
<svg class="a" style="left:1676px;top:305px;" width="16" height="16" viewBox="0 0 16 16"><rect x="4.5" y="6.5" width="10" height="8" rx="1.6" fill="none" stroke="#1d3b30" stroke-width="1.5" stroke-linecap="round" stroke-linejoin="round" stroke-width="1.6"/><path d="M1.5 9 V4.5 A2.8 2.8 0 0 1 7.1 4.5 V6.5" fill="none" stroke="#1d3b30" stroke-width="1.5" stroke-linecap="round" stroke-linejoin="round" stroke-width="1.6"/></svg>
<svg class="a" style="left:1704.5px;top:305.5px;" width="16" height="16" viewBox="0 0 16 16"><rect x="1" y="1" width="12.5" height="13" rx="3.2" fill="none" stroke="#1d3b30" stroke-width="1.5" stroke-linecap="round" stroke-linejoin="round" stroke-width="1.5"/><path d="M4 4.8 H10.5 M4 7.3 H8 M4 9.6 H6" stroke="#1d3b30" stroke-width="1.1"/><circle cx="11.3" cy="11.6" r="3.5" fill="#fff" stroke="#1d3b30" stroke-width="1.4"/><path d="M11.2 9.9 V11.8 H12.8" fill="none" stroke="#1d3b30" stroke-width="1"/></svg>
<svg class="a" style="left:1733px;top:306px;" width="14" height="14" viewBox="0 0 14 14"><circle cx="2.6" cy="7" r="1.9" fill="none" stroke="#1d3b30" stroke-width="1.5" stroke-linecap="round" stroke-linejoin="round" stroke-width="1.6"/><circle cx="11.2" cy="2.3" r="1.9" fill="none" stroke="#1d3b30" stroke-width="1.5" stroke-linecap="round" stroke-linejoin="round" stroke-width="1.6"/><circle cx="11.2" cy="11.7" r="1.9" fill="none" stroke="#1d3b30" stroke-width="1.5" stroke-linecap="round" stroke-linejoin="round" stroke-width="1.6"/><path d="M4.4 6 L9.4 3.3 M4.4 8 L9.4 10.7" fill="none" stroke="#1d3b30" stroke-width="1.5" stroke-linecap="round" stroke-linejoin="round" stroke-width="1.6"/></svg>
<svg class="a" style="left:1760px;top:305px;" width="16" height="16" viewBox="0 0 16 16"><path d="M9.5 0.8 L15.2 6.5 M10.3 1.6 L6.8 6 L3.5 6.8 L9.2 12.5 L10 9.2 L14.4 5.7 M6.3 9.7 L0.8 15.2" fill="none" stroke="#1b1b1b" stroke-width="1.5" stroke-linejoin="round" stroke-linecap="round"/></svg>
<svg class="a" style="left:1806px;top:305px;" width="16" height="16" viewBox="0 0 16 16"><path d="M7.2 1.2 V8.5 M7.2 8.5 L1.8 14.3 M7.2 8.5 L14.2 10.2" fill="none" stroke="#1d3b30" stroke-width="2" stroke-linecap="round"/><circle cx="7.2" cy="8.5" r="1.8" fill="#fff"/><path d="M7.2 6.6 V8.5 L5.7 10.2 M7.2 8.5 L9 9" fill="none" stroke="#1d3b30" stroke-width="1"/></svg>
<svg class="a" style="left:1836.5px;top:305.5px;" width="13" height="15" viewBox="0 0 13 15"><path d="M1 1 H8.5 L12 4.5 V13.8 A0.8 0.8 0 0 1 11.2 14.5 H1.8 A0.8 0.8 0 0 1 1 13.8Z" fill="none" stroke="#b9c9c1" stroke-width="1.1"/><path d="M8.5 1 V4.5 H12" fill="none" stroke="#b9c9c1" stroke-width="0.9"/><path d="M2.8 8.3 H10.2" stroke="#d4dcd8" stroke-width="1.6" stroke-dasharray="1.5 0.5"/></svg>
<div class="a" style="left:1866px;top:300.5px;width:22px;height:22px;border-radius:50%;border:1px solid #e4e4e4;background:#fff"></div>
<svg class="a" style="left:1871px;top:304px;" width="14" height="14" viewBox="0 0 14 14"><path d="M3.2 1 L1.5 5 A2.2 2.2 0 0 1 3.2 1Z" fill="#0b4a3a" stroke="#0b4a3a" stroke-width="1"/><path d="M7.2 1.8 L5.5 5.8 A2.2 2.2 0 0 1 7.2 1.8Z" fill="#0b4a3a" stroke="#0b4a3a" stroke-width="1"/><path d="M3.8 9.6 L9 8 A2.9 2.9 0 0 1 3.8 9.6Z" fill="#07bd48" stroke="#07bd48" stroke-width="0.8"/></svg>
<svg class="a" style="left:1875.5px;top:346px;" width="15" height="14" viewBox="0 0 15 14"><rect x="1" y="1" width="13" height="12" rx="1.5" fill="none" stroke="#1d3b30" stroke-width="1.3" stroke-width="1.5"/><path d="M1 6.8 H14 M7.5 1 V13" fill="none" stroke="#1d3b30" stroke-width="1.3" stroke-width="1.4"/></svg>
<svg class="a" style="left:1875.5px;top:379px;" width="15" height="14" viewBox="0 0 15 14"><rect x="1" y="1" width="13" height="12" rx="1.5" fill="none" stroke="#1d3b30" stroke-width="1.3" stroke-width="1.5"/><path d="M1 5.5 H14 M5.5 1 V13 M8 10.5 L11.5 7.5 M8.5 7.5 H11.5 V10.5" fill="none" stroke="#1d3b30" stroke-width="1.3" stroke-width="1.3"/></svg>
<svg class="a" style="left:1875.5px;top:433.5px;" width="15" height="14" viewBox="0 0 15 14"><circle cx="7.5" cy="7" r="5.8" fill="none" stroke="#c8cfcc" stroke-width="1.2"/><path d="M7.5 1.2 V7 H13.3" fill="none" stroke="#c8cfcc" stroke-width="1.2"/></svg>
<svg class="a" style="left:1875.5px;top:467.5px;" width="15" height="14" viewBox="0 0 15 14"><path d="M1 1 V13 H14" fill="none" stroke="#1d3b30" stroke-width="1.3"/><path d="M3.5 10 L6.5 6.5 L8.5 8.5 L12.5 4 M10 4 H12.5 V6.5" fill="none" stroke="#1d3b30" stroke-width="1.3"/></svg>
<svg class="a" style="left:1875.5px;top:500px;" width="15" height="14" viewBox="0 0 15 14"><path d="M1 1 V13 H14" fill="none" stroke="#1d3b30" stroke-width="1.3"/><rect x="4" y="6" width="2.5" height="6" fill="none" stroke="#1d3b30" stroke-width="1.3"/><rect x="8.5" y="3.5" width="2.5" height="8.5" fill="none" stroke="#1d3b30" stroke-width="1.3"/></svg>
<svg class="a" style="left:1876px;top:548px;" width="14" height="14" viewBox="0 0 14 14"><circle cx="2.0" cy="2.0" r="1.6" fill="#111"/><circle cx="6.5" cy="2.0" r="1.6" fill="#111"/><circle cx="11.0" cy="2.0" r="1.6" fill="#111"/><circle cx="2.0" cy="6.5" r="1.6" fill="#111"/><circle cx="6.5" cy="6.5" r="1.6" fill="#111"/><circle cx="11.0" cy="6.5" r="1.6" fill="#111"/><circle cx="2.0" cy="11.0" r="1.6" fill="#111"/><circle cx="6.5" cy="11.0" r="1.6" fill="#111"/><circle cx="11.0" cy="11.0" r="1.6" fill="#111"/></svg>
<div class="a" style="left:1919px;top:69px;width:4px;height:804px;background:#fff"></div>
<div class="a" style="left:1915px;top:69px;width:4px;height:799px;background:#7f7f7f;border-radius:2px 2px 0 0"></div>
<div class="a" style="left:1895px;top:525.5px;width:24px;height:112px;border:1.3px solid #66cf80;border-right:none;border-radius:7px 0 0 7px;background:#fff"></div>
<div class="t" style="left:1855.5px;top:573px;width:112px;height:18px;transform:rotate(90deg);transform-origin:center;text-align:center;font-size:14px;line-height:18px;color:#62c882;letter-spacing:3.2px">Feedback</div>
<div class="a" style="left:1785px;top:781px;width:72px;height:72px;border-radius:50%;background:#fff;border:4.5px solid #e6e6e6;box-shadow:0 2px 10px rgba(0,0,0,0.08)"></div>
<svg class="a" style="left:1802px;top:795px;" width="36" height="38" viewBox="0 0 36 38"><path d="M12.1 1.6 L5.8 15.7 A7.7 7.7 0 0 1 12.1 1.6 Z" fill="#06463a"/><path d="M24.1 5.9 L17.8 19.9 A7.7 7.7 0 0 1 24.1 5.9 Z" fill="#06463a"/><path d="M13.2 29.8 L33.3 21.4 A10.95 10.95 0 0 1 13.2 29.8 Z" fill="#04d84a"/></svg>
</body></html>
